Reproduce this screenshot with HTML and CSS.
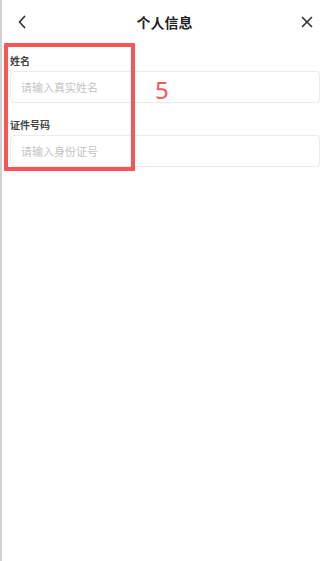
FILE: index.html
```html
<!DOCTYPE html>
<html lang="zh">
<head>
<meta charset="utf-8">
<title>个人信息</title>
<link rel="stylesheet" href="styles.css">
</head>
<body>
<div class="page">
  <header class="header">
    <span class="icon back">
      <svg width="10" height="14" viewBox="0 0 10 14"><path d="M7.5 1.5 L2.5 7 L7.5 12.5" fill="none" stroke="#333" stroke-width="1.7" stroke-linecap="round" stroke-linejoin="round"/></svg>
    </span>
    <h1 class="title">个人信息</h1>
    <span class="icon close">
      <svg width="14" height="14" viewBox="0 0 14 14"><path d="M2.5 2.5 L11.5 11.5 M11.5 2.5 L2.5 11.5" fill="none" stroke="#333" stroke-width="1.7" stroke-linecap="round"/></svg>
    </span>
  </header>
  <form class="form">
    <label class="label" for="name">姓名</label>
    <input class="input" id="name" type="text" placeholder="请输入真实姓名">
    <label class="label second" for="idno">证件号码</label>
    <input class="input" id="idno" type="text" placeholder="请输入身份证号">
  </form>
  <div class="mark"></div>
  <div class="mark-num">5</div>
</div>
</body>
</html>
```
FILE: styles.css
```css
html, body {
  margin: 0;
  padding: 0;
  background: #fff;
}
body {
  font-family: "Noto Sans CJK SC", "Noto Sans", sans-serif;
  color: #333;
}
.page {
  position: relative;
  min-height: 561px;
  border-left: 2px solid #d2d2d2;
  box-sizing: border-box;
}
.header {
  height: 44px;
  display: flex;
  align-items: center;
  justify-content: space-between;
  padding: 0 14px 0 13px;
}
.icon {
  width: 14px;
  height: 14px;
  display: flex;
  align-items: center;
  justify-content: center;
}
.title {
  margin: 0;
  font-size: 14px;
  font-weight: 700;
  line-height: 20px;
  color: #222;
}
.form {
  display: flex;
  flex-direction: column;
  padding: 10px 8px 0 8px;
}
.label {
  font-size: 10px;
  font-weight: 700;
  line-height: 14px;
  color: #444;
  margin-bottom: 3px;
}
.label.second {
  margin-top: 15px;
}
.input {
  height: 32px;
  box-sizing: border-box;
  border: 1px solid #ececec;
  border-radius: 4px;
  padding: 0 10px;
  font-family: "Noto Sans CJK SC", "Noto Sans", sans-serif;
  font-size: 11px;
  color: #333;
  outline: none;
  box-shadow: 0 0 1px rgba(0,0,0,0.04);
}
.input::placeholder {
  color: #c4c4c4;
}
.mark {
  position: absolute;
  left: 2px;
  top: 43px;
  width: 131px;
  height: 128px;
  box-sizing: border-box;
  border: 4px solid #f75656;
  border-radius: 1px;
}
.mark-num {
  position: absolute;
  left: 153px;
  top: 78px;
  font-family: "Noto Sans", sans-serif;
  font-weight: 400;
  font-size: 24px;
  line-height: 24px;
  color: #f75656;
}
```
